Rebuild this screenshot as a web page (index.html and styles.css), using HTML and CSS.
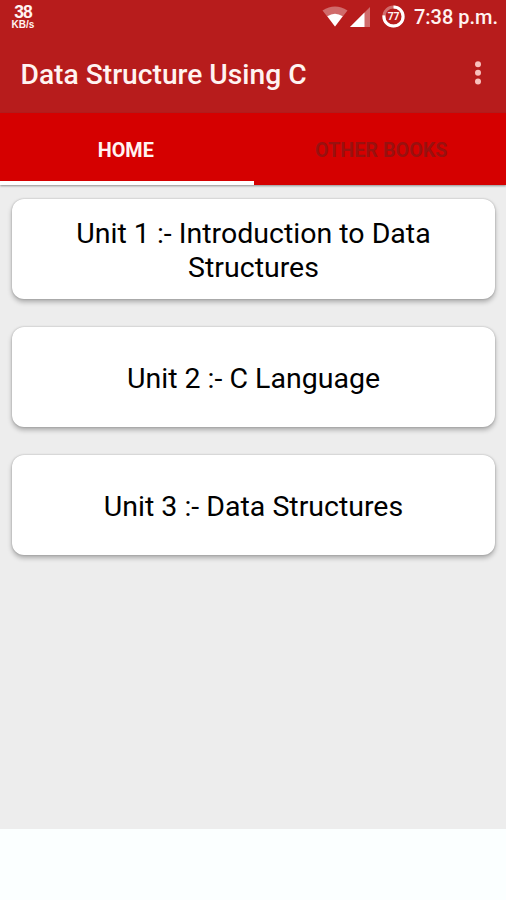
FILE: index.html
```html
<!DOCTYPE html>
<html lang="en">
<head>
<meta charset="utf-8">
<title>Data Structure Using C</title>
<link rel="stylesheet" href="styles.css">
</head>
<body>
<div class="screen">
  <header class="top">
    <div class="status">
      <div class="speed"><span class="speed-value">38</span><span class="speed-unit">KB/s</span></div>
      <div class="status-right">
        <svg class="wifi" width="26" height="21" viewBox="0 0 26 21">
          <path d="M0.5 4.5Q13 -3.5 25.5 4.5L13 20.5Z" fill="#fff" fill-opacity=".35"/>
          <path d="M5.3 10.2Q13 5.2 20.7 10.2L13 20.5Z" fill="#fff"/>
        </svg>
        <svg class="signal" width="20" height="20" viewBox="0 0 20 20">
          <path d="M20 0V20H0Z" fill="#fff" fill-opacity=".35"/>
          <path d="M14.5 5.5V20H0Z" fill="#fff"/>
        </svg>
        <svg class="battery" width="23" height="23" viewBox="0 0 23 23">
          <circle cx="11.5" cy="11.5" r="9.6" fill="none" stroke="#fff" stroke-opacity=".35" stroke-width="3"/>
          <circle cx="11.5" cy="11.5" r="9.6" fill="none" stroke="#fff" stroke-width="3" pathLength="100" stroke-dasharray="77 23" transform="rotate(-90 11.5 11.5)"/>
          <text class="battery-text" x="11.4" y="15.2" text-anchor="middle">77</text>
        </svg>
        <span class="clock">7:38 p.m.</span>
      </div>
    </div>
    <div class="toolbar">
      <h1 class="title">Data Structure Using C</h1>
      <svg class="more" width="6" height="24" viewBox="0 0 6 24" fill="#f9c0bc">
        <circle cx="3" cy="3.3" r="3"/><circle cx="3" cy="11.8" r="3"/><circle cx="3" cy="20.4" r="3"/>
      </svg>
    </div>
  </header>
  <nav class="tabs">
    <div class="tab tab-active">HOME</div>
    <div class="tab">OTHER BOOKS</div>
  </nav>
  <main class="units">
    <div class="card">Unit 1 :- Introduction to Data Structures</div>
    <div class="card">Unit 2 :- C Language</div>
    <div class="card">Unit 3 :- Data Structures</div>
  </main>
  <footer class="banner"></footer>
</div>
</body>
</html>
```
FILE: styles.css
```css
* { box-sizing: border-box; }
body { margin: 0; font-family: Roboto, sans-serif; }
.screen { display: flex; flex-direction: column; width: 506px; height: 900px; background: #ededed; overflow: hidden; }
.top { height: 113px; background: #b71c1c; color: #fff3f1; }
.status { display: flex; justify-content: space-between; height: 36px; padding: 0 8px 0 11px; }
.speed { display: flex; flex-direction: column; align-items: center; width: 24px; padding-top: 4px; font-family: "Liberation Sans", sans-serif; }
.speed-value { font-size: 17.5px; line-height: 16px; font-weight: 700; letter-spacing: -1px; }
.speed-unit { font-size: 10px; line-height: 10px; font-weight: 700; }
.status-right { display: flex; }
.wifi { margin: 6px 2px 0 0; }
.signal { margin: 7px 12px 0 0; }
.battery { margin: 5px 9px 0 0; }
.battery-text { font: 700 10.5px Roboto, sans-serif; fill: #fff3f1; letter-spacing: -.3px; }
.clock { font-size: 20px; line-height: 35px; font-weight: 500; }
.toolbar { display: flex; align-items: center; justify-content: space-between; height: 77px; padding: 0 25px 0 20.5px; }
.title { margin: 0; font-size: 28.2px; line-height: 34px; font-weight: 500; }
.more { margin-bottom: 3px; }
.tabs { display: flex; height: 72px; flex: none; background: #d50000; box-shadow: 0 1px 2px rgba(0,0,0,.4); }
.tab { flex: 1; padding: 2px 0 0 3px; border-bottom: 4px solid transparent; font-size: 19.8px; line-height: 71px; font-weight: 700; text-align: center; color: #98110f; }
.tab-active { padding: 2px 2px 0 0; border-color: #fff; color: #fff3f1; flex: 0 0 253.5px; }
.units { display: flex; flex: 1; flex-direction: column; gap: 28px; padding: 14px 11px 0 12px; }
.card { display: flex; align-items: center; justify-content: center; height: 100px; padding: 3px 48px 0; border-radius: 12px; background: #fff; box-shadow: 0 3px 5px rgba(0,0,0,.28), 0 0 2px rgba(0,0,0,.25); color: #000; font-size: 28.5px; line-height: 34px; text-align: center; }
.banner { height: 71px; background: #fbffff; }
```
